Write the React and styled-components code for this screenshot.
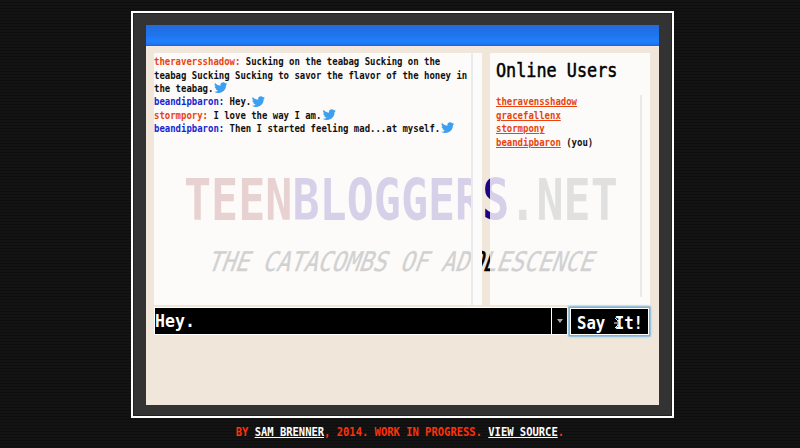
import React from "react";
import styled, { createGlobalStyle } from "styled-components";

const GlobalStyle = createGlobalStyle`
  * { box-sizing: border-box; }
  body {
    margin: 0;
    background: repeating-linear-gradient(#131313 0 2px, #0e0e0e 2px 3px);
    font-family: "DejaVu Sans Mono", monospace;
  }
`;

const Page = styled.div`
  width: 800px;
  height: 448px;
  overflow: hidden;
  display: flex;
  flex-direction: column;
  align-items: center;
  padding: 11px 0 0 5px;
`;

const Frame = styled.main`
  width: 543px;
  height: 407px;
  flex: none;
  background: #333;
  border: 2px solid #fff;
  box-shadow: inset 0 0 0 1px #222;
  padding: 12px 13px 11px;
`;

const Screen = styled.div`
  width: 513px;
  height: 380px;
  background: #f0e7da;
  display: flex;
  flex-direction: column;
  position: relative;
`;

const TitleBar = styled.header`
  height: 21px;
  flex: none;
  background: linear-gradient(#216bdc, #1f76ee 55%, #2080fc 80%, #1d72ee);
  border-bottom: 1px solid #1b62d4;
  box-shadow: 0 1px 0 #f7e9e4;
`;

const Watermark = styled.div`
  position: absolute;
  left: 38px;
  top: 140px;
  white-space: pre;
`;

const SiteName = styled.div`
  font-size: 57px;
  line-height: 70px;
  font-weight: bold;
  transform: scaleX(0.79);
  transform-origin: left;
`;

const Part = styled.span`
  color: ${(p) => p.$color};
`;

const Tagline = styled.div`
  margin: 11px 0 0 26px;
  font-size: 27px;
  line-height: 32px;
  color: #000;
  -webkit-text-stroke: 0.4px #000;
  transform: skewX(-20deg) scaleX(0.846);
  transform-origin: left;
`;

const Panels = styled.div`
  position: relative;
  display: grid;
  grid-template-columns: 328px 160px;
  gap: 8px;
  height: 252px;
  margin: 7px 0 0 8px;
`;

const Panel = styled.section`
  background: rgba(255, 255, 255, 0.82);
`;

const ChatPanel = styled(Panel)`
  display: flex;
  min-width: 0;
`;

const ChatTrack = styled.div`
  width: 11px;
  flex: none;
  background: #fcfbfb;
  border-left: 2px solid #ebebec;
`;

const ChatLog = styled.div`
  width: 317px;
  flex: none;
  padding-top: 2px;
`;

const Line = styled.div`
  display: flex;
  align-items: center;
  height: 13.35px;
  width: 350px;
  font-size: 10px;
  font-weight: bold;
  white-space: pre;
  color: #111;
  transform: scaleX(0.897);
  transform-origin: left;
`;

const Nick = styled.span`
  color: ${(p) => (p.$self ? "#1626d2" : "#e8440f")};
`;

const BirdIcon = styled.svg`
  width: 15px;
  height: 12px;
  margin: 0 0 2px 1px;
  fill: #3c9ff0;
`;

const UsersPanel = styled(Panel)`
  padding: 8px 8px 0 6px;
`;

const Heading = styled.h1`
  margin: 0;
  font-size: 19px;
  line-height: 19px;
  font-weight: normal;
  white-space: pre;
  color: #000;
  -webkit-text-stroke: 0.5px #000;
  transform: scaleX(0.885);
  transform-origin: left;
`;

const UserList = styled.div`
  margin-top: 15px;
  height: 202px;
  border-right: 2px solid #e9e9ea;
`;

const UserLine = styled(Line)`
  width: 150px;
  height: 13.6px;
`;

const UserLink = styled.a`
  color: #e8440f;
  text-decoration: underline;
  text-underline-offset: 1px;
`;

const Composer = styled.form`
  display: flex;
  align-items: flex-start;
  height: 29px;
  margin: 2px 0 0 8px;
`;

const Field = styled.div`
  width: 398px;
  height: 28px;
  background: #000;
  border: 1px solid #fff;
  display: flex;
  align-items: center;
  color: #fff;
`;

const BigText = styled.span`
  font-size: 18px;
  line-height: 24px;
  font-weight: bold;
  white-space: pre;
  transform: scaleX(${(p) => p.$scale});
  transform-origin: left;
`;

const DropButton = styled.div`
  width: 16px;
  height: 28px;
  background: #000;
  border: solid #fff;
  border-width: 1px 1px 1px 0;
  display: grid;
  place-items: center;
`;

const Arrow = styled.svg`
  width: 6px;
  height: 4px;
  fill: #aaa;
`;

const SayButton = styled.div`
  position: relative;
  width: 79px;
  height: 27px;
  margin: 1px 0 0 2px;
  background: #000;
  color: #fff;
  border: 1px solid #fff;
  box-shadow: 0 0 0 1.5px #79b3dc, 0 0 3px 1px #6ba7d2;
  padding: 2px 0 0 6px;
`;

const Cursor = styled.svg`
  position: absolute;
  left: 43px;
  top: 8px;
  width: 8px;
  height: 12px;
  fill: none;
  stroke: #eee;
`;

const Footer = styled.footer`
  margin: 5px 5px 0 0;
  font-size: 12px;
  line-height: 18px;
  font-weight: bold;
  white-space: pre;
  color: #ff3108;
  transform: scaleX(0.874);
`;

const FooterLink = styled.a`
  color: #fff;
  text-decoration: underline;
  text-underline-offset: 1px;
`;

const Bird = () => (
  <BirdIcon viewBox="0 0 24 22" preserveAspectRatio="none">
    <path d="M23.6 4.9c-.8.4-1.7.6-2.7.8.9-.6 1.7-1.5 2-2.6-.9.5-1.9.9-2.9 1.1A4.8 4.8 0 0 0 11.600 8.600 13.700 13.700 0 0 1 1.700 3.600a4.800 4.800 0 0 0 1.500 6.400c-.8 0-1.500-.2-2.200-.6 0 2.300 1.600 4.300 3.900 4.800-.7.2-1.400.2-2.200.1.600 1.900 2.400 3.300 4.500 3.400A9.700 9.700 0 0 1 .1 19.600 13.700 13.700 0 0 0 21.200 7.400c.9-.7 1.800-1.500 2.400-2.500z" />
  </BirdIcon>
);

const MESSAGES = [
  { nick: "theraversshadow", lines: [
    " Sucking on the teabag Sucking on the",
    "teabag Sucking Sucking to savor the flavor of the honey in",
    "the teabag.",
  ] },
  { nick: "beandipbaron", self: true, lines: [" Hey."] },
  { nick: "stormpory", lines: [" I love the way I am."] },
  { nick: "beandipbaron", self: true, lines: [" Then I started feeling mad...at myself."] },
];

const USERS = [
  { name: "theravensshadow" },
  { name: "gracefallenx" },
  { name: "stormpony" },
  { name: "beandipbaron", note: " (you)" },
];

export default function App() {
  return (
    <>
      <GlobalStyle />
      <Page>
        <Frame>
          <Screen>
            <TitleBar />
            <Watermark>
              <SiteName>
                <Part $color="#7f0400">TEEN</Part>
                <Part $color="#1c0485">BLOGGERS</Part>
                <Part $color="#555">.NET</Part>
              </SiteName>
              <Tagline>THE CATACOMBS OF ADOLESCENCE</Tagline>
            </Watermark>
            <Panels>
              <ChatPanel>
                <ChatLog>
                  {MESSAGES.map((m, i) =>
                    m.lines.map((text, j) => (
                      <Line key={`${i}-${j}`}>
                        {j === 0 && <Nick $self={m.self}>{m.nick}:</Nick>}
                        <span>{text}</span>
                        {j === m.lines.length - 1 && <Bird />}
                      </Line>
                    ))
                  )}
                </ChatLog>
                <ChatTrack />
              </ChatPanel>
              <UsersPanel>
                <Heading>Online Users</Heading>
                <UserList>
                  {USERS.map((u) => (
                    <UserLine key={u.name}>
                      <UserLink>{u.name}</UserLink>
                      {u.note && <span>{u.note}</span>}
                    </UserLine>
                  ))}
                </UserList>
              </UsersPanel>
            </Panels>
            <Composer>
              <Field>
                <BigText $scale={0.92}>Hey.</BigText>
              </Field>
              <DropButton>
                <Arrow viewBox="0 0 6 4"><path d="M0 0h6L3 4z" /></Arrow>
              </DropButton>
              <SayButton>
                <BigText as="div" $scale={0.87}>Say It!</BigText>
                <Cursor viewBox="0 0 8 12"><path d="M1 1l3 3 3-3M1 11l3-3 3 3M4 4v4M0 6h3" /></Cursor>
              </SayButton>
            </Composer>
          </Screen>
        </Frame>
        <Footer>
          BY <FooterLink>SAM BRENNER</FooterLink>, 2014. WORK IN PROGRESS. <FooterLink>VIEW SOURCE</FooterLink>.
        </Footer>
      </Page>
    </>
  );
}
